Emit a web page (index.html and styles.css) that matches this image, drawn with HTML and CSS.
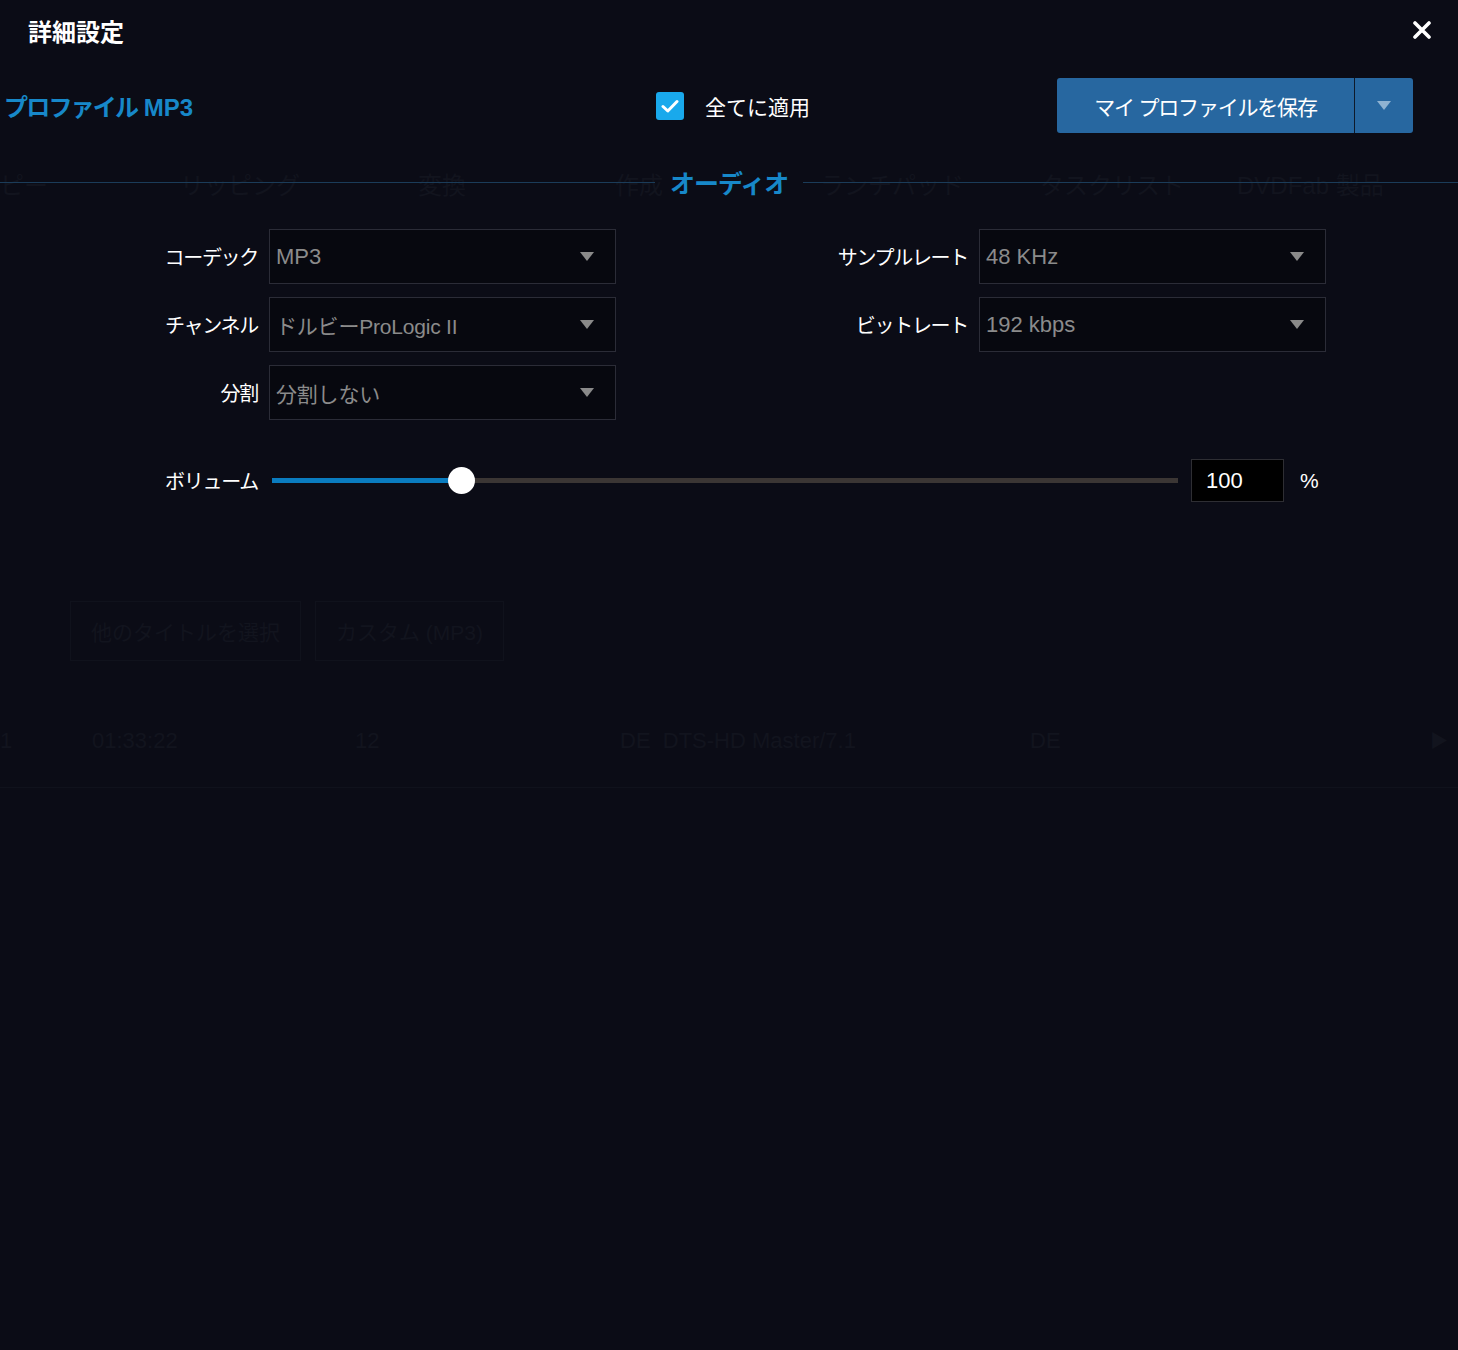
FILE: index.html
```html
<!DOCTYPE html>
<html lang="ja">
<head>
    <meta charset="UTF-8">
    <meta name="viewport" content="width=device-width, initial-scale=1.0">
    <title>詳細設定</title>
    <link rel="stylesheet" href="styles.css">
</head>
<body>
    <!-- アプリ本体（ダイアログの下に薄く見える） -->
    <div class="backdrop">
        <div class="ghost-tabs">
            <span>ピー</span>
            <span>リッピング</span>
            <span>変換</span>
            <span>作成</span>
            <span>ランチパッド</span>
            <span>タスクリスト</span>
            <span>DVDFab 製品</span>
        </div>
        <div class="ghost-buttons">
            <span class="ghost-btn">他のタイトルを選択</span>
            <span class="ghost-btn">カスタム (MP3)</span>
        </div>
        <div class="ghost-row">
            <span>1</span>
            <span>01:33:22</span>
            <span>12</span>
            <span>DE&nbsp; DTS-HD Master/7.1</span>
            <span>DE</span>
            <span class="ghost-arrow">&#9654;</span>
        </div>
    </div>

    <div class="dialog">
        <div class="dialog-header">
            <h1 class="dialog-title">詳細設定</h1>
            <button class="close-btn" aria-label="閉じる">
                <svg width="18" height="18" viewBox="0 0 18 18">
                    <path d="M2 2 L16 16 M16 2 L2 16" stroke="#fff" stroke-width="3.6" stroke-linecap="round"/>
                </svg>
            </button>
        </div>

        <div class="profile-row">
            <div class="profile-name"><span class="kana">プロファイル</span> MP3</div>
            <label class="apply-all">
                <span class="checkbox">
                    <svg width="18" height="14" viewBox="0 0 18 14">
                        <path d="M2 7.5 L6.8 12 L16 2.5" fill="none" stroke="#fff" stroke-width="3" stroke-linecap="round" stroke-linejoin="round"/>
                    </svg>
                </span>
                全てに適用
            </label>
            <div class="save-btn">
                <span class="save-main">マイ プロファイルを保存</span>
                <span class="save-drop"><span class="tri tri-light"></span></span>
            </div>
        </div>

        <div class="section-title"><span>オーディオ</span></div>

        <div class="form-grid">
            <div class="field-label">コーデック</div>
            <div class="select"><span>MP3</span><span class="tri"></span></div>
            <div class="field-label">サンプルレート</div>
            <div class="select"><span>48 KHz</span><span class="tri"></span></div>

            <div class="field-label">チャンネル</div>
            <div class="select"><span class="select-jp">ドルビーProLogic II</span><span class="tri"></span></div>
            <div class="field-label">ビットレート</div>
            <div class="select"><span>192 kbps</span><span class="tri"></span></div>

            <div class="field-label">分割</div>
            <div class="select"><span class="select-jp">分割しない</span><span class="tri"></span></div>
        </div>

        <div class="volume-row">
            <div class="volume-label">ボリューム</div>
            <div class="slider">
                <div class="slider-track">
                    <div class="slider-fill" style="width: 20.86%"></div>
                </div>
                <div class="slider-thumb" style="left: 20.86%"></div>
            </div>
            <div class="volume-input">100</div>
            <div class="volume-unit">%</div>
        </div>
    </div>
</body>
</html>
```

FILE: styles.css
```css
body {
    margin: 0;
    background-color: #0b0c16;
    font-family: "Liberation Sans", "Noto Sans CJK JP", sans-serif;
    color: #fff;
    height: 1350px;
    overflow: hidden;
}
.backdrop {
    height: 1350px;
    color: #12141e;
}
.ghost-tabs {
    display: grid;
    grid-template-columns: 180px 238px 197px 205px 220px 197px auto;
    padding-top: 170px;
    font-size: 24px;
    line-height: 32px;
}
.ghost-buttons {
    display: flex;
    gap: 14px;
    margin-top: 399px;
    padding-left: 70px;
    font-size: 21px;
}
.ghost-btn {
    padding: 14px 20px;
    border: 1px solid #10121c;
}
.ghost-row {
    display: grid;
    grid-template-columns: 92px 263px 265px 410px 400px auto;
    margin-top: 67px;
    padding-bottom: 33px;
    border-bottom: 1px solid #10121c;
    font-size: 22px;
    line-height: 26px;
}
.ghost-arrow {
    font-size: 18px;
}
.dialog {
    position: absolute;
    inset: 0;
}
.dialog-header {
    display: flex;
    align-items: center;
    justify-content: space-between;
    height: 60px;
    padding: 0 27px 0 28px;
}
.dialog-title {
    margin: 0;
    font-size: 24px;
    font-weight: bold;
}
.close-btn {
    background: none;
    border: none;
    padding: 0;
    display: flex;
    cursor: pointer;
}
.profile-row {
    display: flex;
    align-items: center;
    height: 55px;
    margin-top: 18px;
    padding-left: 4px;
}
.profile-name {
    width: 652px;
    color: #1788c9;
    font-size: 24px;
    font-weight: bold;
}
.profile-name .kana {
    letter-spacing: -1.8px;
}
.apply-all {
    display: flex;
    align-items: center;
    gap: 21px;
    font-size: 21px;
}
.checkbox {
    display: flex;
    align-items: center;
    justify-content: center;
    width: 28px;
    height: 28px;
    border-radius: 3px;
    background-color: #19a9ec;
}
.save-btn {
    display: flex;
    margin-left: auto;
    margin-right: 45px;
    height: 55px;
    border-radius: 3px;
    background-color: #2767a0;
    font-size: 21px;
    letter-spacing: -1.2px;
}
.save-main {
    display: flex;
    align-items: center;
    justify-content: center;
    width: 297px;
    border-right: 1px solid #0e1a2a;
}
.save-drop {
    display: flex;
    align-items: center;
    justify-content: center;
    width: 58px;
}
.tri {
    width: 0;
    height: 0;
    border-left: 7px solid transparent;
    border-right: 7px solid transparent;
    border-top: 9px solid #8a8a8a;
}
.tri-light {
    border-top-color: #8fb3d2;
}
.section-title {
    display: flex;
    align-items: center;
    gap: 15px;
    margin-top: 32px;
    height: 34px;
    color: #1788c9;
    font-size: 25px;
    font-weight: bold;
    letter-spacing: -1px;
}
.section-title span {
    background-color: #0b0c16;
}
.section-title::before, .section-title::after {
    content: '';
    flex: 1;
    height: 1px;
    background-color: #1b3c59;
}
.form-grid {
    display: grid;
    grid-template-columns: 269px 347px 363px 347px;
    grid-auto-rows: 55px;
    row-gap: 13px;
    margin-top: 30px;
}
.field-label {
    display: flex;
    align-items: center;
    justify-content: flex-end;
    padding-right: 11px;
    font-size: 20px;
    letter-spacing: -1.3px;
}
.select {
    display: flex;
    align-items: center;
    justify-content: space-between;
    padding: 0 21px 0 6px;
    border: 1px solid #2b2c37;
    background-color: #07080f;
    color: #8b8b8b;
    font-size: 22px;
}
.select-jp {
    font-size: 21px;
    letter-spacing: -0.2px;
}
.volume-row {
    display: flex;
    align-items: center;
    margin-top: 39px;
    height: 43px;
}
.volume-label {
    width: 258px;
    text-align: right;
    font-size: 20px;
    letter-spacing: -1.3px;
}
.slider {
    position: relative;
    display: flex;
    align-items: center;
    width: 906px;
    height: 27px;
    margin-left: 14px;
}
.slider-track {
    width: 100%;
    height: 5px;
    background-color: #3b3634;
}
.slider-fill {
    height: 100%;
    background-color: #0a7cbf;
}
.slider-thumb {
    position: absolute;
    top: 0;
    width: 27px;
    height: 27px;
    margin-left: -13px;
    border-radius: 50%;
    background-color: #fff;
}
.volume-input {
    display: flex;
    align-items: center;
    box-sizing: border-box;
    width: 93px;
    height: 43px;
    margin-left: 13px;
    padding-left: 14px;
    border: 1px solid #2e2e33;
    background-color: #000;
    font-size: 22px;
}
.volume-unit {
    margin-left: 16px;
    font-size: 21px;
}
```
